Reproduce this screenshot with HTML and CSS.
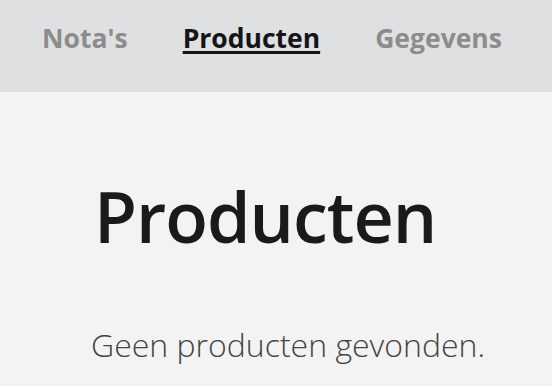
FILE: index.html
```html
<!DOCTYPE html>
<html lang="nl">
<head>
<meta charset="utf-8">
<title>Producten</title>
<link rel="stylesheet" href="styles.css">
</head>
<body>
<nav class="nav">
  <a class="nav-link" href="#">Nota's</a>
  <a class="nav-link active" href="#">Producten</a>
  <a class="nav-link" href="#">Gegevens</a>
</nav>
<main class="main">
  <h1 class="title">Producten</h1>
  <p class="empty">Geen producten gevonden.</p>
</main>
</body>
</html>
```
FILE: styles.css
```css
html, body {
  margin: 0;
  padding: 0;
  background: #f3f3f3;
  font-family: "Open Sans", sans-serif;
}
.nav {
  height: 92px;
  background: #dfe0e1;
  display: flex;
  align-items: flex-start;
  gap: 55px;
  padding: 23px 0 0 42px;
  box-sizing: border-box;
}
.nav-link {
  font-size: 26.5px;
  font-weight: 700;
  color: #8c8c8c;
  text-decoration: none;
  line-height: 1.2;
}
.nav-link.active {
  color: #151515;
  text-decoration: underline;
  text-decoration-thickness: 3px;
  text-underline-offset: 3px;
}
.main {
  padding: 0 0 0 91px;
}
.title {
  margin: 89px 0 0 3px;
  font-size: 70px;
  font-weight: 600;
  letter-spacing: -1px;
  color: #1a1a1a;
  line-height: 1;
}
.empty {
  margin: 73px 0 0;
  font-size: 32px;
  font-weight: 300;
  color: #444;
  line-height: 1.3;
  white-space: nowrap;
}
```
